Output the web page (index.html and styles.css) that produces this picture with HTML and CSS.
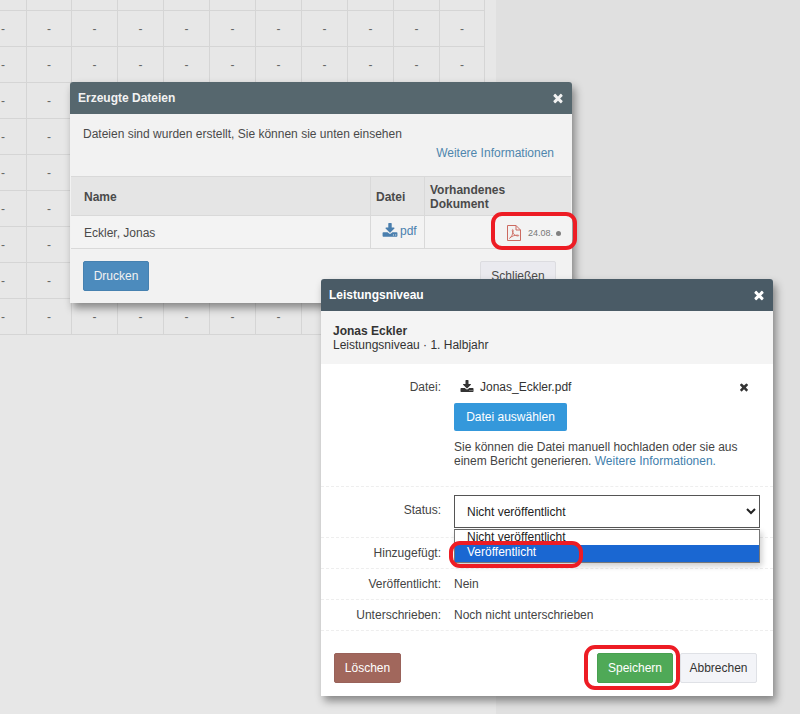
FILE: index.html
```html
<!DOCTYPE html>
<html lang="de">
<head>
<meta charset="utf-8">
<title>Leistungsniveau</title>
<link rel="stylesheet" href="styles.css">
</head>
<body>
<div class="desk">
  <div class="sheet">
    <div class="grid">
      <i></i><i></i><i></i><i></i><i></i><i></i><i></i><i></i><i></i><i></i><i></i>
      <b>-</b><b>-</b><b>-</b><b>-</b><b>-</b><b>-</b><b>-</b><b>-</b><b>-</b><b>-</b><b>-</b>
      <b>-</b><b>-</b><b>-</b><b>-</b><b>-</b><b>-</b><b>-</b><b>-</b><b>-</b><b>-</b><b>-</b>
      <b>-</b><b>-</b><b>-</b><b>-</b><b>-</b><b>-</b><b>-</b><b>-</b><b>-</b><b>-</b><b>-</b>
      <b>-</b><b>-</b><b>-</b><b>-</b><b>-</b><b>-</b><b>-</b><b>-</b><b>-</b><b>-</b><b>-</b>
      <b>-</b><b>-</b><b>-</b><b>-</b><b>-</b><b>-</b><b>-</b><b>-</b><b>-</b><b>-</b><b>-</b>
      <b>-</b><b>-</b><b>-</b><b>-</b><b>-</b><b>-</b><b>-</b><b>-</b><b>-</b><b>-</b><b>-</b>
      <b>-</b><b>-</b><b>-</b><b>-</b><b>-</b><b>-</b><b>-</b><b>-</b><b>-</b><b>-</b><b>-</b>
      <b>-</b><b>-</b><b>-</b><b>-</b><b>-</b><b>-</b><b>-</b><b>-</b><b>-</b><b>-</b><b>-</b>
      <b>-</b><b>-</b><b>-</b><b>-</b><b>-</b><b>-</b><b>-</b><b>-</b><b>-</b><b>-</b><b>-</b>
    </div>
  </div>

  <section class="modal modal-files">
    <header class="modal-head head-dim">
      <span>Erzeugte Dateien</span>
      <svg class="ico-close" viewBox="0 0 1792 1792"><path d="M1490 1322q0 40-28 68l-136 136q-28 28-68 28t-68-28l-294-294-294 294q-28 28-68 28t-68-28l-136-136q-28-28-28-68t28-68l294-294-294-294q-28-28-28-68t28-68l136-136q28-28 68-28t68 28l294 294 294-294q28-28 68-28t68 28l136 136q28 28 28 68t-28 68l-294 294 294 294q28 28 28 68z"/></svg>
    </header>
    <div class="files-intro">
      <p>Dateien sind wurden erstellt, Sie können sie unten einsehen</p>
      <a class="more-link">Weitere Informationen</a>
    </div>
    <div class="files-table">
      <div class="th c-name">Name</div>
      <div class="th c-file">Datei</div>
      <div class="th c-doc">Vorhandenes Dokument</div>
      <div class="td c-name">Eckler, Jonas</div>
      <div class="td c-file">
        <svg class="ico-dl" viewBox="0 0 1792 1792"><path d="M1344 1344q0-26-19-45t-45-19-45 19-19 45 19 45 45 19 45-19 19-45zm256 0q0-26-19-45t-45-19-45 19-19 45 19 45 45 19 45-19 19-45zm128-224v320q0 40-28 68t-68 28h-1472q-40 0-68-28t-28-68v-320q0-40 28-68t68-28h465l135 136q58 56 136 56t136-56l136-136h464q40 0 68 28t28 68zm-325-569q17 41-14 70l-448 448q-18 19-45 19t-45-19l-448-448q-31-29-14-70 17-39 59-39h256v-448q0-26 19-45t45-19h256q26 0 45 19t19 45v448h256q42 0 59 39z"/></svg>
        <a class="pdf-link">pdf</a>
      </div>
      <div class="td c-doc doc-cell">
        <svg class="ico-pdf" viewBox="0 0 14 16"><path class="pdf-page" d="M.5.5h8.5l4.5 4.5v10.500H.5zM9 .5V5h4.500"/><path class="pdf-mark" d="M2.500 13.300c2-1 3.500-4.500 3.700-7.800 0-1.300-.9-1.300-.9 0 .2 3 2 5.400 5.700 5.500 1 0 1-.9 0-.9-3-.1-6.500 1-8.500 3.200z"/></svg>
        <span class="doc-date">24.08.</span>
        <span class="doc-dot"></span>
      </div>
    </div>
    <footer class="files-foot">
      <button class="btn btn-print">Drucken</button>
      <button class="btn btn-close">Schließen</button>
    </footer>
  </section>

  <section class="modal modal-level">
    <header class="modal-head head-live">
      <span>Leistungsniveau</span>
      <svg class="ico-close" viewBox="0 0 1792 1792"><path d="M1490 1322q0 40-28 68l-136 136q-28 28-68 28t-68-28l-294-294-294 294q-28 28-68 28t-68-28l-136-136q-28-28-28-68t28-68l294-294-294-294q-28-28-28-68t28-68l136-136q28-28 68-28t68 28l294 294 294-294q28-28 68-28t68 28l136 136q28 28 28 68t-28 68l-294 294 294 294q28 28 28 68z"/></svg>
    </header>
    <div class="person">
      <strong>Jonas Eckler</strong>
      <span>Leistungsniveau · 1. Halbjahr</span>
    </div>
    <div class="row row-file">
      <div class="label">Datei:</div>
      <div class="value">
        <div class="file-line">
          <svg class="ico-dl-dark" viewBox="0 0 1792 1792"><path d="M1344 1344q0-26-19-45t-45-19-45 19-19 45 19 45 45 19 45-19 19-45zm256 0q0-26-19-45t-45-19-45 19-19 45 19 45 45 19 45-19 19-45zm128-224v320q0 40-28 68t-68 28h-1472q-40 0-68-28t-28-68v-320q0-40 28-68t68-28h465l135 136q58 56 136 56t136-56l136-136h464q40 0 68 28t28 68zm-325-569q17 41-14 70l-448 448q-18 19-45 19t-45-19l-448-448q-31-29-14-70 17-39 59-39h256v-448q0-26 19-45t45-19h256q26 0 45 19t19 45v448h256q42 0 59 39z"/></svg>
          <span class="file-name">Jonas_Eckler.pdf</span>
          <svg class="ico-remove" viewBox="0 0 1792 1792"><path d="M1490 1322q0 40-28 68l-136 136q-28 28-68 28t-68-28l-294-294-294 294q-28 28-68 28t-68-28l-136-136q-28-28-28-68t28-68l294-294-294-294q-28-28-28-68t28-68l136-136q28-28 68-28t68 28l294 294 294-294q28-28 68-28t68 28l136 136q28 28 28 68t-28 68l-294 294 294 294q28 28 28 68z"/></svg>
        </div>
        <button class="btn btn-choose">Datei auswählen</button>
        <p class="hint">Sie können die Datei manuell hochladen oder sie aus einem Bericht generieren. <a class="info-link">Weitere Informationen.</a></p>
      </div>
    </div>
    <div class="row row-status">
      <div class="label">Status:</div>
      <div class="value select-wrap">
        <select class="status-select"><option>Nicht veröffentlicht</option><option>Veröffentlicht</option></select>
        <div class="dropdown">
          <div class="opt">Nicht veröffentlicht</div>
          <div class="opt opt-active">Veröffentlicht</div>
        </div>
      </div>
    </div>
    <div class="row row-plain"><div class="label">Hinzugefügt:</div><div class="value"></div></div>
    <div class="row row-plain"><div class="label">Veröffentlicht:</div><div class="value">Nein</div></div>
    <div class="row row-plain"><div class="label">Unterschrieben:</div><div class="value">Noch nicht unterschrieben</div></div>
    <footer class="level-foot">
      <button class="btn btn-delete">Löschen</button>
      <div class="foot-right">
        <button class="btn btn-save">Speichern</button>
        <button class="btn btn-cancel">Abbrechen</button>
      </div>
    </footer>
  </section>

  <div class="ring ring-doc"></div>
  <div class="ring ring-option"></div>
  <div class="ring ring-save"></div>
</div>
</body>
</html>
```

FILE: styles.css
```css
* { box-sizing: border-box; }
html, body { margin: 0; padding: 0; }
body { font-family: "Liberation Sans", Arial, sans-serif; font-size: 12px; color: #333; }
p { margin: 0; }

.desk { position: relative; width: 800px; height: 714px; overflow: hidden; background: #e0e0e0; }
.sheet { width: 496px; height: 714px; background: #e7e7e7; }
.grid {
  width: 485px;
  display: grid;
  grid-template-columns: 27px 45px repeat(8, 46px) 45px;
  grid-template-rows: 11px repeat(9, 36px);
}
.grid i, .grid b {
  border-right: 1px solid #d5d5d5;
  border-bottom: 1px solid #d5d5d5;
  font-style: normal;
  font-weight: 400;
}
.grid b { display: flex; align-items: center; justify-content: center; color: #666; padding-top: 1px; }
.grid b:nth-child(11n+1) { justify-content: flex-start; padding-left: 1px; }

.modal { position: absolute; display: flex; flex-direction: column; border-radius: 4px 4px 0 0; box-shadow: 3px 5px 9px rgba(0,0,0,.42); }
.modal-head {
  height: 32px; flex: none; padding: 0 7px 0 8px;
  display: flex; align-items: center; justify-content: space-between;
  color: #fff; font-weight: 700; border-radius: 3px 3px 0 0;
}
.head-dim { background: #56676e; color: #f2f2f2; }
.head-live { background: #4a5b66; }
.ico-close { width: 14px; height: 14px; fill: #fff; }
.head-dim .ico-close { fill: #f2f2f2; }

.modal-files { left: 70px; top: 82px; width: 502px; height: 221px; background: #f2f2f2; color: #4a4a4a; }
.files-intro { height: 62px; padding: 13px 18px 0 13px; display: flex; flex-direction: column; }
.more-link { align-self: flex-end; margin-top: 5px; color: #4f86ad; }
.files-table {
  margin: 0 1px; display: grid; grid-template-columns: 299px 54px 147px; grid-template-rows: 39px 32px;
  border-top: 1px solid #d9d9d9; border-bottom: 1px solid #d9d9d9;
}
.th { background: #e5e5e5; font-weight: 700; padding: 2px 13px 0; display: flex; align-items: center; border-bottom: 1px solid #d9d9d9; line-height: 14px; }
.td { background: #f3f3f3; padding: 1px 13px 0; display: flex; align-items: center; }
.c-file, .c-doc { border-left: 1px solid #d9d9d9; }
.th.c-file { padding: 2px 5px 0; }
.th.c-doc { padding: 2px 5px 0; }
.td.c-file { padding: 0 0 2px 11px; gap: 2px; }
.ico-dl { width: 16px; height: 16px; fill: #4a7fae; }
.pdf-link { color: #4a7fae; }
.doc-cell { justify-content: flex-end; padding: 2px 10px 0 0; }
.ico-pdf { width: 14px; height: 16px; margin-right: 7px; fill: none; }
.pdf-page { stroke: #cc6a60; stroke-width: 1; }
.pdf-mark { stroke: #cc6a60; stroke-width: .9; }
.doc-date { font-size: 9px; color: #777; margin-right: 3px; }
.doc-dot { width: 5px; height: 5px; border-radius: 50%; background: #808080; }
.files-foot { flex: 1; padding: 12px 16px 0 13px; display: flex; justify-content: space-between; align-items: flex-start; }

.btn { font: 12px "Liberation Sans", Arial, sans-serif; border-radius: 2px; border: 1px solid transparent; padding: 0; height: 30px; }
.btn-print { width: 66px; background: #4c8bbd; border-color: #4681b0; color: #f2f2f2; }
.btn-close { width: 76px; background: #eaeaef; border-color: #dcdce0; color: #4a4a4a; }

.modal-level { left: 321px; top: 279px; width: 452px; height: 417px; background: #fff; border-radius: 4px 4px 0 0; }
.person { height: 53px; flex: none; background: #f4f4f4; padding: 13px 12px 0; display: flex; flex-direction: column; line-height: 14px; }
.person strong { color: #333; }
.row { display: flex; border-bottom: 1px dashed #eee; }
.label { width: 120px; flex: none; text-align: right; color: #444; }
.value { margin-left: 13px; flex: 1; min-width: 0; color: #444; }
.row-file { height: 123px; padding-top: 16px; }
.file-line { display: flex; align-items: center; height: 14px; padding-left: 6px; color: #333; }
.ico-dl-dark { width: 14px; height: 14px; fill: #333; margin-right: 6px; }
.file-name { flex: 1; }
.ico-remove { width: 12px; height: 12px; fill: #333; margin-right: 23px; }
.btn-choose { display: block; width: 113px; height: 28px; margin-top: 9px; background: #3498db; color: #fff; }
.hint { width: 300px; margin-top: 9px; line-height: 14px; color: #444; }
.info-link { color: #3f80ad; }
.row-status { height: 51px; padding-top: 8px; }
.row-status .label { padding-top: 8px; }
.select-wrap { position: relative; }
.status-select { display: block; width: 306px; height: 33px; padding-left: 8px; font: 12px "Liberation Sans", Arial, sans-serif; color: #222; background: #fff; border: 1px solid #555; border-radius: 0; }
.dropdown { position: absolute; left: 0; top: 34px; width: 306px; height: 34px; background: #fff; border: 1px solid #777; border-top-color: #666; overflow: hidden; box-shadow: 2px 3px 6px rgba(0,0,0,.2); z-index: 2; }
.opt { height: 15px; padding-left: 12px; line-height: 14px; color: #222; }
.opt-active { background: #1a67d2; color: #fff; line-height: 15px; height: 17px; }
.row-plain { height: 31px; padding-top: 8px; }
.level-foot { flex: 1; padding: 22px 16px 0 13px; display: flex; justify-content: space-between; align-items: flex-start; }
.foot-right { display: flex; gap: 7px; }
.btn-delete { width: 67px; background: #a1675c; border-color: #99625a; color: #fff; }
.btn-save { width: 76px; background: #4fa957; border-color: #48a050; color: #fff; }
.btn-cancel { width: 77px; background: #f3f4f8; border-color: #dfe1e6; color: #333; }

.ring { position: absolute; border: 4px solid #ed1c24; border-radius: 11px; z-index: 5; }
.ring-doc { left: 491px; top: 212px; width: 86px; height: 38px; }
.ring-option { left: 449px; top: 541px; width: 134px; height: 27px; }
.ring-save { left: 584px; top: 645px; width: 96px; height: 45px; }
```
